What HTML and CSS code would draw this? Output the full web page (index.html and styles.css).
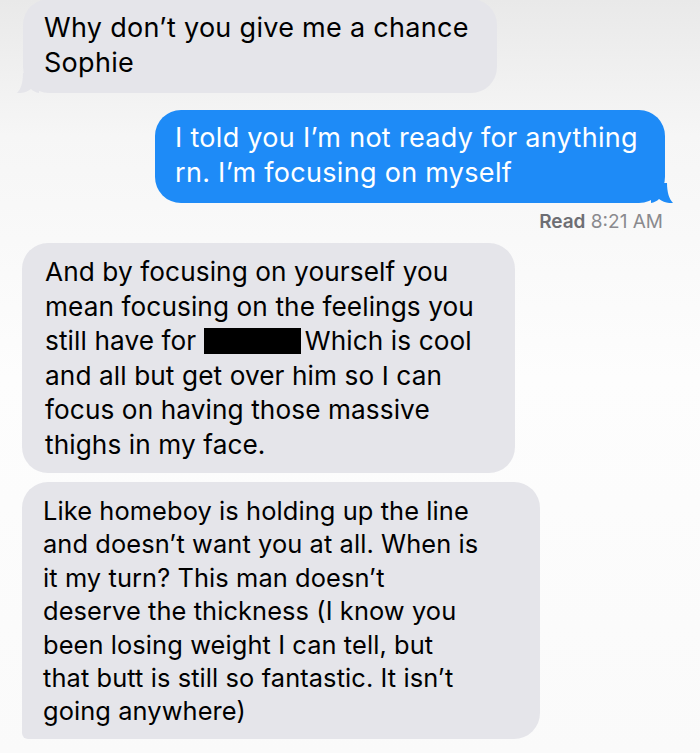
FILE: index.html
```html
<!DOCTYPE html>
<html lang="en">
<head>
    <meta charset="UTF-8">
    <meta name="viewport" content="width=device-width, initial-scale=1.0">
    <title>Messages</title>
    <link rel="stylesheet" href="styles.css">
</head>
<body>
    <div class="thread">
        <div class="bubble received first">
            Why don’t you give me a chance<br>Sophie
            <svg class="tail tail-left" viewBox="0 0 22 20"><path d="M6 0 C6 9 4 16 0 20 C5 20.5 10 19 14 16 C16 18 19 19.5 22 20 L22 0 Z"/></svg>
        </div>

        <div class="bubble sent">
            I told you I’m not ready for anything<br>rn. I’m focusing on myself
            <svg class="tail tail-right" viewBox="0 0 22 20"><path d="M16 0 C16 9 18 16 22 20 C17 20.5 12 19 8 16 C6 18 3 19.5 0 20 L0 0 Z"/></svg>
        </div>
        <div class="receipt"><strong>Read</strong> 8:21 AM</div>

        <div class="bubble received third">
            And by focusing on yourself you<br>
            mean focusing on the feelings you<br>
            still have for <span class="redacted"></span>Which is cool<br>
            and all but get over him so I can<br>
            focus on having those massive<br>
            thighs in my face.
        </div>

        <div class="bubble received last">
            Like homeboy is holding up the line<br>
            and doesn’t want you at all. When is<br>
            it my turn? This man doesn’t<br>
            deserve the thickness (I know you<br>
            been losing weight I can tell, but<br>
            that butt is still so fantastic. It isn’t<br>
            going anywhere)
        </div>
    </div>
</body>
</html>
```

FILE: styles.css
```css
body {
    margin: 0;
    font-family: Inter, "Liberation Sans", Arial, sans-serif;
    background: linear-gradient(to bottom, #e9e9e9 0%, #f6f6f6 18%, #fdfdfd 50%, #fafafa 100%);
    overflow: hidden;
}
.thread {
    display: flex;
    flex-direction: column;
    height: 753px;
}
.bubble {
    position: relative;
    box-sizing: border-box;
    font-size: 27px;
    line-height: 34.5px;
    letter-spacing: 0.3px;
    border-radius: 26px;
    white-space: nowrap;
}
.received {
    align-self: flex-start;
    margin-left: 22px;
    background: #e5e5ea;
    color: #000;
}
.sent {
    align-self: flex-end;
    margin-top: 17px;
    margin-right: 35px;
    width: 510px;
    padding: 11px 20px 13px 20px;
    background: #1e8bf7;
    color: #fff;
}
.first {
    margin-top: -1px;
    margin-left: 23px;
    width: 474px;
    padding: 12px 20px 13px 21px;
}
.third {
    margin-top: 10px;
    width: 493px;
    padding: 12px 20px 11px 23px;
    font-size: 26.2px;
    letter-spacing: 0.1px;
}
.last {
    margin-top: 9px;
    width: 518px;
    padding: 12px 20px 11px 21px;
    font-size: 25.4px;
    letter-spacing: 0.1px;
    line-height: 33.4px;
    border-bottom-left-radius: 6px;
}
.tail {
    position: absolute;
    bottom: 0;
    width: 22px;
    height: 20px;
}
.tail-left {
    left: -6px;
    fill: #e5e5ea;
}
.tail-right {
    right: -8px;
    fill: #1e8bf7;
}
.receipt {
    align-self: flex-end;
    margin: 8px 37px 0 0;
    font-size: 19px;
    line-height: 22px;
    color: #8a8a8e;
}
.receipt strong {
    color: #6e6e73;
    font-weight: 600;
}
.redacted {
    display: inline-block;
    width: 97px;
    height: 26px;
    margin-right: 4px;
    vertical-align: -4px;
    background: #000;
}
```
